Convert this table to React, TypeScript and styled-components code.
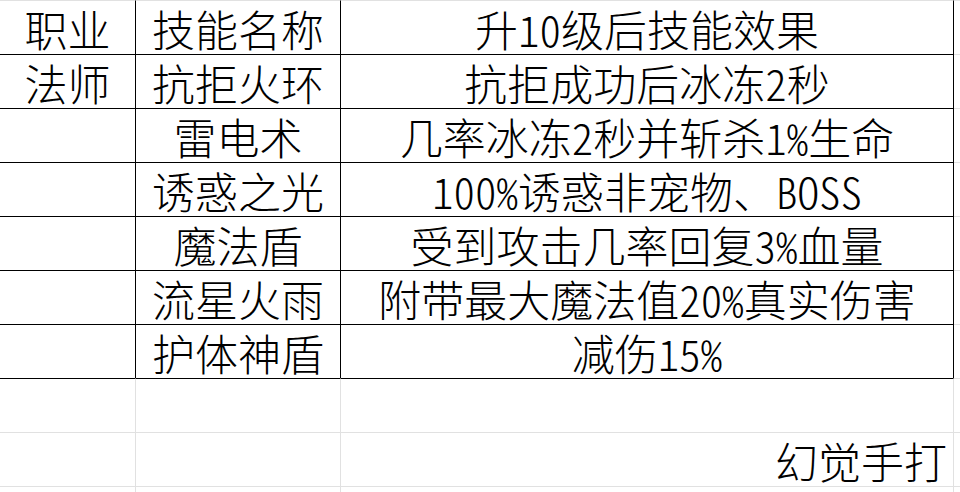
import React from "react";
import styled, { createGlobalStyle } from "styled-components";

const Global = createGlobalStyle`
  html, body {
    margin: 0;
    padding: 0;
    background: #ffffff;
    overflow: hidden;
  }
  body {
    font-family: "Noto Sans CJK SC", "Noto Sans CJK JP", sans-serif;
    color: #000000;
  }
`;

const DARK = "#000000";
const LIGHT = "#e1e1e1";

const Sheet = styled.div`
  display: flex;
  flex-direction: column;
  width: 960px;
  height: 492px;
  overflow: hidden;
`;

const Row = styled.div`
  display: grid;
  grid-template-columns: 136px 205px 613px 1fr;
  height: 54px;
  flex: none;
`;

const Cell = styled.div<{ $top: boolean; $right?: boolean | null; $align?: "center" | "right" }>`
  box-sizing: border-box;
  height: 54px;
  border-top: 1px solid ${(p) => (p.$top ? DARK : LIGHT)};
  border-right: ${(p) =>
    p.$right === null ? "none" : `1px solid ${p.$right ? DARK : LIGHT}`};
  display: flex;
  align-items: center;
  justify-content: ${(p) => (p.$align === "right" ? "flex-end" : "center")};
  padding: ${(p) => (p.$align === "right" ? "1px 6px 0 0" : "1px 0 0 0")};
  font-size: 43px;
  font-weight: 300;
  line-height: 43px;
  font-feature-settings: "hwid" 1;
  white-space: nowrap;
`;

type RowData = { a: string; b: string; c: string };

const rows: RowData[] = [
  { a: "职业", b: "技能名称", c: "升10级后技能效果" },
  { a: "法师", b: "抗拒火环", c: "抗拒成功后冰冻2秒" },
  { a: "", b: "雷电术", c: "几率冰冻2秒并斩杀1%生命" },
  { a: "", b: "诱惑之光", c: "100%诱惑非宠物、BOSS" },
  { a: "", b: "魔法盾", c: "受到攻击几率回复3%血量" },
  { a: "", b: "流星火雨", c: "附带最大魔法值20%真实伤害" },
  { a: "", b: "护体神盾", c: "减伤15%" },
];

export default function App() {
  return (
    <>
      <Global />
      <Sheet>
        {rows.map((r, i) => (
          <Row key={i}>
            <Cell $top={i > 0} $right>{r.a}</Cell>
            <Cell $top={i > 0} $right>{r.b}</Cell>
            <Cell $top={i > 0} $right>{r.c}</Cell>
            <Cell $top={false} $right={null} />
          </Row>
        ))}
        <Row>
          <Cell $top $right={false} />
          <Cell $top $right={false} />
          <Cell $top $right={false} />
          <Cell $top={false} $right={null} />
        </Row>
        <Row>
          <Cell $top={false} $right={false} />
          <Cell $top={false} $right={false} />
          <Cell $top={false} $right={false} $align="right">幻觉手打</Cell>
          <Cell $top={false} $right={null} />
        </Row>
        <Row>
          <Cell $top={false} $right={false} />
          <Cell $top={false} $right={false} />
          <Cell $top={false} $right={false} />
          <Cell $top={false} $right={null} />
        </Row>
      </Sheet>
    </>
  );
}
